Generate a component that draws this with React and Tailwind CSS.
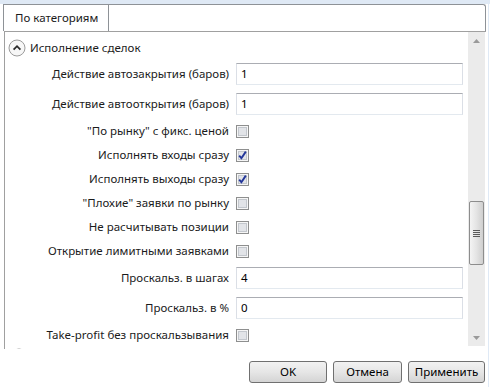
import React from 'react';

const rows = [
  { label: 'Действие автозакрытия (баров)', type: 'input', value: '1' },
  { label: 'Действие автооткрытия (баров)', type: 'input', value: '1' },
  { label: '"По рынку" с фикс. ценой', type: 'check' },
  { label: 'Исполнять входы сразу', type: 'check', checked: true },
  { label: 'Исполнять выходы сразу', type: 'check', checked: true },
  { label: '"Плохие" заявки по рынку', type: 'check' },
  { label: 'Не расчитывать позиции', type: 'check' },
  { label: 'Открытие лимитными заявками', type: 'check' },
  { label: 'Проскальз. в шагах', type: 'input', value: '4' },
  { label: 'Проскальз. в %', type: 'input', value: '0' },
  { label: 'Take-profit без проскальзывания', type: 'check' },
];

const CheckBox = ({ checked }) => (
  <svg width="13" height="13" viewBox="0 0 13 13">
    <rect x="0.5" y="0.5" width="12" height="12" fill="#f6f6f6" stroke="#8e8f8f" />
    <rect x="2.5" y="2.5" width="8" height="8" fill="#e2e4e8" stroke="#c3c7cd" />
    {checked && (
      <path d="M3.2 6.6 L5.4 9.2 L9.8 2.6" stroke="#23369a" strokeWidth="1.9" fill="none" />
    )}
  </svg>
);

const Expander = () => (
  <svg width="18" height="18" viewBox="0 0 18 18">
    <circle cx="9" cy="9" r="8" fill="#f7f7f7" stroke="#9b9b9b" />
    <path d="M5.6 10.6 L9 7.2 L12.4 10.6" stroke="#2b2b2b" strokeWidth="1.8" fill="none" />
  </svg>
);

const Row = ({ row }) => (
  <div className={`flex items-center ${row.type === 'input' ? 'h-[30px]' : 'h-[24px]'}`}>
    <div className="w-[224px] text-right text-[#1b1b1b] whitespace-nowrap">{row.label}</div>
    <div className="ml-[7px] flex-1 pr-[5px]">
      {row.type === 'input' ? (
        <div className="h-[22px] border border-t-[#abadb3] border-x-[#dbdfe6] border-b-[#e3e9ef] bg-white flex items-center pl-[4px] text-black">
          {row.value}
        </div>
      ) : (
        <div className="flex items-center">
          <CheckBox checked={row.checked} />
        </div>
      )}
    </div>
  </div>
);

const Button = ({ label, width }) => (
  <div
    className={`${width} h-[22px] flex items-center justify-center rounded-[3px] border border-[#707070] bg-gradient-to-b from-[#f2f2f2] via-[#e6e6e6] to-[#d4d4d4] text-black`}
  >
    {label}
  </div>
);

export default function App() {
  return (
    <div className="w-[490px] h-[387px] bg-white overflow-hidden font-['Noto_Sans',sans-serif] text-[11.5px] leading-none">
      <div className="h-[4px] bg-[#dfe9f5]" />
      <div className="flex h-[383px]">
        <div className="w-[488px] flex flex-col">
          {/* tab strip */}
          <div className="ml-[3px] w-[483px] h-[27px] border-t border-l border-r border-[#8e9297] rounded-tr-[3px] flex">
            <div className="w-[105px] border-r border-[#8e9297] flex items-center pl-[11px] text-[#1b1b1b]">
              По категориям
            </div>
          </div>
          {/* content panel */}
          <div className="ml-[4px] w-[482px] h-[318px] border-t border-l border-[#a0a0a0] flex overflow-hidden">
            <div className="flex-1 overflow-hidden">
              <div className="h-[27px] pt-[5px] flex items-center pl-[3px] gap-[4px] text-[#1b1b1b]">
                <Expander />
                <span>Исполнение сделок</span>
              </div>
              {rows.map((row) => (
                <Row key={row.label} row={row} />
              ))}
              <div className="pl-[5px] pt-[1px]">
                <Expander />
              </div>
            </div>
            {/* scrollbar */}
            <div className="w-[17px] h-[314px] bg-[#ebebeb] flex flex-col mr-[1px]">
              <div className="h-[17px] flex items-center justify-center">
                <svg width="7" height="4" viewBox="0 0 7 4">
                  <path d="M0 4 L3.5 0 L7 4 Z" fill="#9a9a9a" />
                </svg>
              </div>
              <div className="h-[152px]" />
              <div className="mx-[1px] h-[64px] rounded-[2px] border border-[#8d8d8d] bg-gradient-to-r from-[#f4f4f4] via-[#e4e4e4] to-[#cfcfcf] flex flex-col items-center justify-center gap-[1px]">
                <div className="w-[7px] h-[1px] bg-[#5a5a5a]" />
                <div className="w-[7px] h-[1px] bg-[#5a5a5a]" />
                <div className="w-[7px] h-[1px] bg-[#5a5a5a]" />
                <div className="w-[7px] h-[1px] bg-[#5a5a5a]" />
              </div>
              <div className="flex-1" />
              <div className="h-[17px] flex items-center justify-center">
                <svg width="7" height="4" viewBox="0 0 7 4">
                  <path d="M0 0 L3.5 4 L7 0 Z" fill="#9a9a9a" />
                </svg>
              </div>
            </div>
          </div>
          {/* buttons */}
          <div className="mt-[12px] flex justify-end gap-[6px] pr-[3px]">
            <Button label="OK" width="w-[78px]" />
            <Button label="Отмена" width="w-[69px]" />
            <Button label="Применить" width="w-[77px]" />
          </div>
        </div>
        <div className="w-[1px] bg-[#dfe9f5]" />
        <div className="flex-1" />
      </div>
    </div>
  );
}
